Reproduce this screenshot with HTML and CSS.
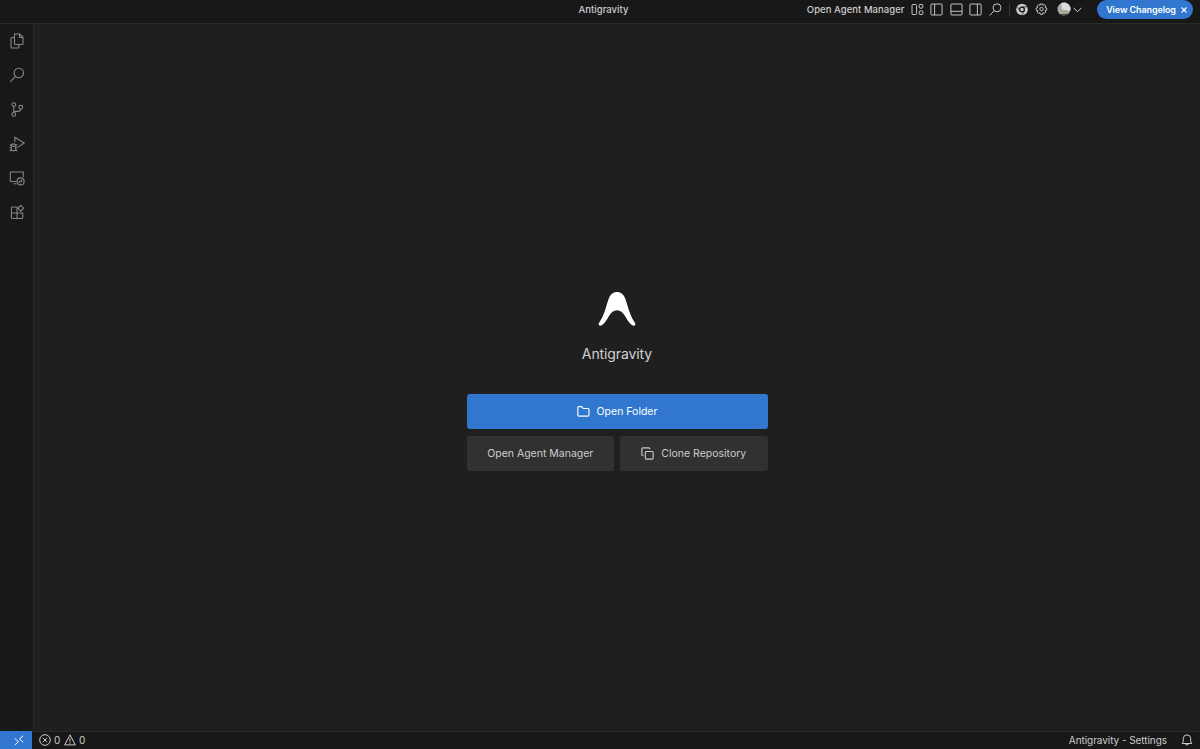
FILE: index.html
```html
<!DOCTYPE html>
<html lang="en">
<head>
<meta charset="utf-8">
<title>Antigravity</title>
<link rel="stylesheet" href="styles.css">
</head>
<body>
<div class="app">
  <header class="titlebar">
    <div class="window-title"><span>Antigravity</span></div>
    <div class="title-actions">
      <span class="agent-link">Open Agent Manager</span>
      <div class="layout-icons">
        <svg class="icon" viewBox="0 0 13 13"><rect x="1" y="1.5" width="4.6" height="10" rx="1"/><rect x="8.2" y="1.5" width="3.6" height="3.6" rx=".8"/><rect x="8.2" y="7.9" width="3.6" height="3.6" rx=".8"/></svg>
        <svg class="icon" viewBox="0 0 13 13"><rect x=".9" y="1" width="11.2" height="11" rx="1"/><path d="M4.6 1v11"/></svg>
        <svg class="icon" viewBox="0 0 13 13"><rect x=".9" y="1" width="11.2" height="11" rx="1"/><path d="M1 8.3h11"/></svg>
        <svg class="icon" viewBox="0 0 13 13"><rect x=".9" y="1" width="11.2" height="11" rx="1"/><path d="M8.4 1v11"/></svg>
        <svg class="icon" viewBox="0 0 13 13"><circle cx="8" cy="4.8" r="4"/><path d="M5.1 7.8L.6 12.5"/></svg>
      </div>
      <span class="divider"></span>
      <div class="tool-icons">
        <svg class="icon" viewBox="0 0 13 13"><circle class="solid" cx="6" cy="6.5" r="5.8"/><circle class="hole" cx="6" cy="6.5" r="3"/><path class="cut" d="M6 3.900h5.200M3.700 7.800L1.200 3.500M8.300 7.800L5.800 12.200"/><circle class="solid" cx="6" cy="6.5" r="1.700"/></svg>
        <svg class="icon" viewBox="0 0 13 13"><path d="M5.5.9h2l.4 1.500 1.400-.8 1.500 1.500-.8 1.400 1.700.5v2.100l-1.700.5.8 1.400-1.500 1.500-1.400-.8-.4 1.700h-2l-.5-1.700-1.400.8L2.100 9l.8-1.400-1.700-.5V5l1.700-.5-.8-1.400 1.500-1.500 1.400.8z"/><circle cx="6.5" cy="6.1" r="1.700"/></svg>
      </div>
      <div class="account">
        <svg class="avatar" viewBox="0 0 14 14">
          <defs><clipPath id="avatar-clip"><circle cx="7" cy="6" r="6.500"/></clipPath></defs>
          <g clip-path="url(#avatar-clip)"><path fill="#a9aaae" d="M0-1h14v15H0z"/><path fill="#deded9" d="M4-1h10v9H5z"/><path fill="#a7a99b" d="M0 7l5-.5 9 1.500v6H0z"/><path fill="#343b35" d="M0 10.500l5 .8 9-.8V14H0z"/></g>
        </svg>
        <svg class="chevron" viewBox="0 0 9 6"><path d="M.6.8l3.900 4 3.900-4"/></svg>
      </div>
      <button class="changelog"><span>View Changelog</span><svg class="close" viewBox="0 0 7 7"><path d="M.6.6l5.800 5.800M6.400.6L.6 6.400"/></svg></button>
    </div>
  </header>
  <div class="workbench">
    <nav class="activity">
      <svg viewBox="0 0 16 16"><path d="M5.500 1h5.200L14 4.300v6.200a1 1 0 0 1-1 1H6.500a1 1 0 0 1-1-1zM10.500 1v3.500H14M5.500 4.500H3a1 1 0 0 0-1 1v8.500a1 1 0 0 0 1 1h6a1 1 0 0 0 1-1v-2.500"/></svg>
      <svg viewBox="0 0 16 16"><circle cx="9.800" cy="6" r="4.700"/><path d="M6.500 9.400L1.300 14.800"/></svg>
      <svg viewBox="0 0 16 16"><circle cx="4.800" cy="2.600" r="1.900"/><circle cx="4.800" cy="12.400" r="1.900"/><circle cx="11.800" cy="5.300" r="1.900"/><path d="M4.800 4.500v6M11.800 7.200c-.3 1.700-1.300 2.200-3 2.200H7c-1.300 0-2 .4-2.200 1.300"/></svg>
      <svg viewBox="0 0 16 16"><path d="M5.800 6V1.300L15.200 7 8.800 11.100"/><path d="M2.300 10.100a2.200 2.200 0 0 1 4.400 0v2.600a2.200 2.200 0 0 1-4.400 0zM2.300 10.300h4.400M.8 8.300l1.600 1.500M8.200 8.300L6.600 9.800M.5 11.800h1.800M6.700 11.800h1.800M.8 15l1.700-1.500M8.200 15l-1.700-1.500"/></svg>
      <svg viewBox="0 0 16 16"><path d="M7.500 11.500H1.300V2h13v5M4.500 13.700h3"/><circle cx="11.600" cy="11.400" r="3.500"/><path d="M10 11l1.100 1.100L10 13.200M13.200 9.700l-1.100 1.100 1.100 1.100"/></svg>
      <svg viewBox="0 0 16 16"><path d="M8 3H3.400a1 1 0 0 0-1 1v9.500a1 1 0 0 0 1 1h9.300a1 1 0 0 0 1-1V9H2.400M8 3v11.500M11.800 1.300l2.900 2.900-2.900 2.900-2.900-2.900z"/></svg>
    </nav>
    <main class="welcome">
      <svg class="logo" viewBox="0 0 38 36"><path d="M19 1C23 1 25.600 3.600 27.200 7.500C29.100 12.300 30.100 17.500 32.100 22.500C33.500 26 35 29 36.900 31.700C38.300 33.800 36.500 35.500 34.200 34.300C31 32.300 29.300 28.500 27 25C24.700 21.300 22.500 19.200 19 19.200S13.300 21.300 11 25C8.700 28.500 7 32.300 3.800 34.300C1.500 35.500-.3 33.800 1.100 31.700C3 29 4.500 26 5.900 22.500C7.900 17.500 8.900 12.300 10.800 7.500C12.400 3.600 15 1 19 1Z"/></svg>
      <h1 class="name"><span>Antigravity</span></h1>
      <div class="actions">
        <button class="btn primary"><svg class="btn-icon" viewBox="0 0 14 14"><path d="M.9 3a1.200 1.200 0 0 1 1.200-1.200h3l1.600 2h5a1.200 1.200 0 0 1 1.200 1.200v5.800a1.200 1.200 0 0 1-1.200 1.200H2.100A1.200 1.200 0 0 1 .9 10.800z"/></svg><span>Open Folder</span></button>
        <button class="btn"><span>Open Agent Manager</span></button>
        <button class="btn"><svg class="btn-icon" viewBox="0 0 14 14"><rect x="4.600" y="4.800" width="8.500" height="8.300" rx="1.200"/><path d="M2.500 9.300h-.4A1.200 1.200 0 0 1 .9 8.100V2.200A1.200 1.200 0 0 1 2.100 1h6.200a1.200 1.200 0 0 1 1.200 1.200v.3"/></svg><span>Clone Repository</span></button>
      </div>
    </main>
  </div>
  <footer class="statusbar">
    <div class="remote"><svg viewBox="0 0 10 11"><path d="M.8 3.500l3.700 3.200L.8 10M9.200.8L5.500 4l3.700 3.200"/></svg></div>
    <div class="problems">
      <svg viewBox="0 0 12 12"><circle cx="6" cy="6" r="5.300"/><path d="M3.800 3.800l4.400 4.400M8.200 3.800L3.800 8.200"/></svg><span class="count">0</span>
      <svg viewBox="0 0 12 12"><path d="M6 .9l5.300 10H.7zM6 4.200v3.500M6 8.500v1.200"/></svg><span class="count">0</span>
    </div>
    <div class="status-right"><span>Antigravity - Settings</span><svg viewBox="0 0 12 12"><path d="M1.200 9.500h9.600L9.700 7.300V4.600a3.700 3.700 0 0 0-7.400 0v2.700zM4.700 9.700a1.300 1.300 0 0 0 2.600 0"/></svg></div>
  </footer>
</div>
</body>
</html>
```
FILE: styles.css
```css
* { box-sizing: border-box; }
body { margin: 0; background: #1f1f1f; color: #ccc; font-family: Inter, "Liberation Sans", sans-serif; }
button { border: 0; margin: 0; padding: 0; font: inherit; color: inherit; }
svg { display: block; flex: none; fill: none; stroke: currentColor; stroke-width: 1; overflow: visible; }
.app { height: 749px; display: flex; flex-direction: column; overflow: hidden; }

.titlebar { height: 24px; flex: none; display: grid; grid-template-columns: 1fr 100px 1fr; background: #181818; border-bottom: 1px solid #2a2a2a; font-size: 9.5px; font-weight: 500; line-height: 19px; white-space: nowrap; padding-left: 7px; }
.window-title { grid-column: 2; text-align: center; letter-spacing: .05px; }
.title-actions { display: flex; justify-content: flex-end; align-items: center; height: 19px; padding-right: 7px; }
.agent-link { margin-right: 6px; letter-spacing: .04px; }
.layout-icons, .tool-icons { display: flex; gap: 6.5px; }
.icon { width: 13px; height: 13px; stroke-width: .95; }
.divider { width: 1px; height: 12px; background: #383838; margin: 0 6px 0 7px; }
.solid { fill: #ccc; stroke: none; }
.hole { fill: #181818; stroke: none; }
.cut { stroke: #181818; stroke-width: .7; }
.account { display: flex; align-items: center; gap: 2px; margin: 0 15px 0 9px; }
.avatar { width: 14px; height: 14px; stroke: none; }
.chevron { width: 9px; height: 6px; }
.changelog { width: 96px; height: 19px; flex: none; display: flex; align-items: center; justify-content: center; gap: 5px; padding-left: 3px; border-radius: 10px; background: #3277cf; color: #fff; font-size: 9px; font-weight: 600; letter-spacing: -.1px; }
.close { width: 6px; height: 6px; stroke-width: 1.300; }

.workbench { flex: 1; min-height: 0; display: flex; }
.activity { width: 34px; flex: none; display: flex; flex-direction: column; align-items: center; gap: 18.300px; padding-top: 9px; background: #181818; border-right: 1px solid #2a2a2a; color: #868686; }
.activity svg { width: 16px; height: 16px; stroke-width: 1.100; }
.welcome { flex: 1; display: flex; flex-direction: column; align-items: center; padding-top: 267px; }
.logo { width: 38px; height: 36px; fill: #fff; stroke: none; }
.name { margin: 16px 0 0; height: 22px; font-size: 14px; line-height: 22px; font-weight: 400; letter-spacing: -.1px; color: #d2d2d2; }
.actions { width: 301px; margin-top: 29px; display: grid; grid-template-columns: 1fr 1fr; column-gap: 6px; row-gap: 7px; }
.btn { height: 35px; display: flex; align-items: center; justify-content: center; gap: 7px; border-radius: 3px; background: #313131; font-size: 10.500px; font-weight: 400; color: #ccc; white-space: nowrap; }
.primary { grid-column: 1 / -1; background: #3277cf; color: #fff; }
.btn-icon { width: 13px; height: 13px; stroke-width: 1.200; }

.statusbar { height: 18px; flex: none; display: flex; align-items: center; background: #181818; border-top: 1px solid #2a2a2a; font-size: 10px; line-height: 17px; padding-bottom: 1px; }
.remote { width: 32px; height: 18px; flex: none; display: flex; align-items: center; justify-content: center; padding-left: 5px; background: #3277cf; color: #fff; }
.remote svg { width: 10px; height: 11px; }
.problems { display: flex; align-items: center; gap: 3px; margin-left: 7px; }
.problems svg, .status-right svg { width: 12px; height: 12px; }
.count { min-width: 7px; }
.status-right { margin-left: auto; padding-right: 7px; display: flex; align-items: center; gap: 14px; letter-spacing: -.06px; }
```
